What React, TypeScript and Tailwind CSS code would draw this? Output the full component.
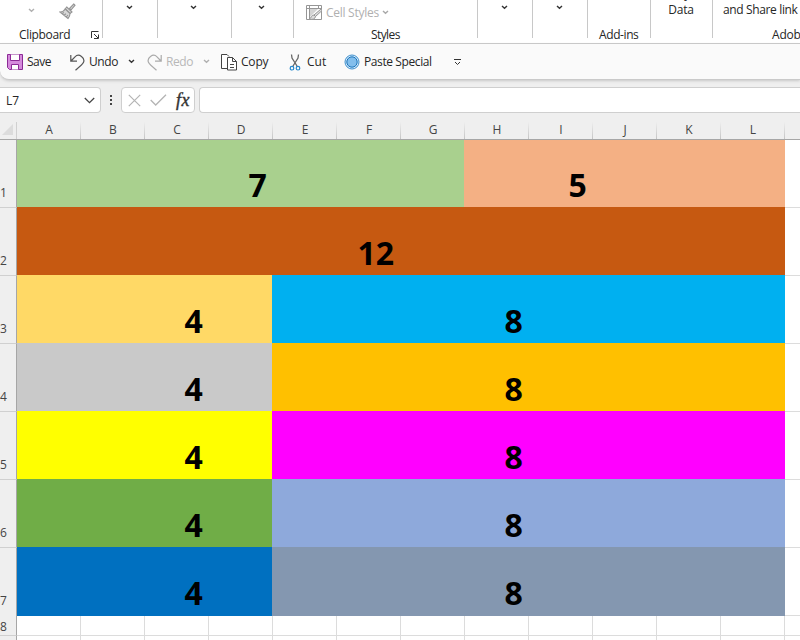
import React from "react";

function Chevron({ color = "#333", className = "" }: { color?: string; className?: string }) {
  return (
    <svg width="7" height="5" viewBox="0 0 7 5" className={"block shrink-0 " + className} fill="none" stroke={color} strokeWidth="1.4">
      <path d="M1 1 L3.5 3.3 L6 1" />
    </svg>
  );
}

function Group({ className, label, labelClass, children }: { className: string; label?: string; labelClass?: string; children?: React.ReactNode }) {
  return (
    <div className={"flex h-[43px] shrink-0 flex-col overflow-hidden " + className}>
      <div className="flex h-[26px] w-full">{children}</div>
      {label && <div className={"h-4 whitespace-nowrap leading-4 " + labelClass}>{label}</div>}
    </div>
  );
}

function Divider() {
  return <div className="h-[38px] w-px shrink-0 bg-[#c8c8c8]" />;
}

function Ribbon() {
  return (
    <div className="flex h-11 overflow-hidden border-b border-[#c8c8c8] bg-white">
      <Group className="w-[102px]">
        <div className="flex w-full flex-col">
          <div className="flex h-[26px] shrink-0">
            <Chevron color="#b0b0b0" className="ml-[28px] mt-[8px]" />
            <svg className="ml-[24px] mt-[3px]" width="18" height="17" viewBox="0 0 18 17" fill="#d8d8d8" stroke="#969696" strokeWidth="1.1">
              <path d="M14.7 1 L16 2.2 L12 7 L10.4 5.5 Z" />
              <path d="M7.7 4 L13 9 L11 10.5 L6.2 6 Z" />
              <path d="M6.2 6 L11 10.5 C11 13 10.5 14 9 15.5 L1 9 C3.5 9 5 8 6.2 6 Z M3 10.5 L5 9.5 M5 12.3 L7 10.8 M7.3 14 L9 12" />
            </svg>
          </div>
          <div className="flex h-4 shrink-0">
            <span className="ml-[19px] w-[71px] pt-px leading-4 tracking-[-0.35px]">Clipboard</span>
            <svg className="mt-[4px]" width="10" height="10" viewBox="0 0 10 10" fill="none" stroke="#333">
              <path d="M1.5 8 V1.5 H8.5 M4 4 L8 8 M8.5 4.5 V8.5 H4" />
            </svg>
          </div>
        </div>
      </Group>
      <Divider />
      <Group className="w-[54px]"><Chevron className="ml-[23px] mt-[5px]" /></Group>
      <Divider />
      <Group className="w-[73px]"><Chevron className="ml-[32px] mt-[5px]" /></Group>
      <Divider />
      <Group className="w-[61px]"><Chevron className="ml-[26px] mt-[5px]" /></Group>
      <Divider />
      <Group className="w-[183px]" label="Styles" labelClass="pl-[77px] pt-px tracking-[-0.6px]">
        <svg className="ml-[12px] mt-[5px]" width="17" height="16" viewBox="0 0 17 16" fill="none" stroke="#969696">
          <path d="M.5 .5 H15.5 V14.5 H.5 Z M.5 3.5 H15.5 M3.5 .5 V14.5 M12.5 .5 V4" />
          <path d="M4 4 H12 L4 12 Z" fill="#d4d4d4" stroke="none" />
          <path d="M15 4 L8 10 L9.5 11.5 L15.5 6 M8 10 C5 10 6 13 3 14 C7 15 9 14 9.5 11.5" fill="#ddd" />
        </svg>
        <span className="ml-[3px] mt-[5px] w-[56px] whitespace-nowrap leading-4 tracking-[-0.27px] text-[#b0b0b0]">Cell Styles</span>
        <Chevron color="#a8a8a8" className="mt-[10px]" />
      </Group>
      <Divider />
      <Group className="w-[54px]"><Chevron className="ml-[23px] mt-[5px]" /></Group>
      <Divider />
      <Group className="w-[54px]"><Chevron className="ml-[23px] mt-[5px]" /></Group>
      <Divider />
      <Group className="w-[62px]" label="Add-ins" labelClass="pl-[11px] pt-px tracking-[-0.4px]" />
      <Divider />
      <Group className="w-[61px]">
        <div className="-mt-[14px] flex w-full flex-col items-center pr-px">
          <span className="h-4 leading-4">Analyze</span>
          <span className="leading-4 tracking-[-0.2px]">Data</span>
        </div>
      </Group>
      <Divider />
      <Group className="w-[87px]" label="Adobe Acrobat" labelClass="pl-[59px] pt-px tracking-[-0.2px]">
        <span className="ml-[10px] mt-[2px] whitespace-nowrap leading-4 tracking-[-0.36px]">and Share link</span>
      </Group>
    </div>
  );
}

function QuickAccess() {
  return (
    <div className="flex h-9 items-center rounded-bl-[9px] border-b border-[#cacaca] bg-[#fafafa] shadow-[0_1px_3px_#c8c8c8]">
      <svg className="ml-[7px] mt-px" width="16" height="16" viewBox="0 0 16 16" fill="#d58bdc" stroke="#8c2b96">
        <path d="M.5 .5 H15.5 V15.5 H2.5 L.5 13.5 Z" />
        <path d="M3.5 .5 V6.5 H12.5 V.5 M4.5 15.5 V10.5 H11.5 V15.5" fill="#fff" />
      </svg>
      <span className="ml-[4px] w-[43px] pt-px tracking-[-0.5px]">Save</span>
      <svg className="mt-px" width="15" height="17" viewBox="0 0 15 17" fill="none" stroke="#555" strokeWidth="1.2">
        <path d="M.8 1 V7.2 H7 M1 7 L5 2.8 C9-1.2 15.5 4 13.4 8.5 C12.8 10 11 11.5 5.5 16.2" />
      </svg>
      <span className="ml-[4px] w-[39px] pt-px tracking-[-0.4px]">Undo</span>
      <Chevron />
      <svg className="ml-[12px] mt-px" width="15" height="17" viewBox="0 0 15 17" fill="none" stroke="#aaa" strokeWidth="1.2">
        <path d="M14.2 1 V7.2 H8 M14 7 L10 2.8 C6-1.2-.5 4 1.6 8.5 C2.2 10 4 11.5 9.5 16.2" />
      </svg>
      <span className="ml-[4px] w-[37px] pt-px tracking-[-0.45px] text-[#b8b8b8]">Redo</span>
      <Chevron color="#b0b0b0" />
      <svg className="ml-[11px] mt-px" width="16" height="17" viewBox="0 0 16 17" fill="#fff" stroke="#444">
        <path d="M6 14.5 H.5 V.5 H6 L8 2.5" />
        <path d="M6.5 3.5 H11.5 L15.5 7.5 V16 H6.5 Z M11.5 3.5 V7.5 H15.5 M9 10.5 H13 M9 13.5 H13" />
      </svg>
      <span className="ml-[4px] w-[48px] pt-px tracking-[-0.2px]">Copy</span>
      <svg className="mt-[2px]" width="12" height="17" viewBox="0 0 12 17" fill="none" stroke="#666">
        <path d="M2.5 .5 L3 4 L8.3 12.5 M9.5 .5 L9 4 L3.7 12.5" strokeWidth="1.3" />
        <circle cx="3" cy="14.2" r="1.8" stroke="#2587cc" strokeWidth="1.2" />
        <circle cx="9" cy="14.2" r="1.8" stroke="#2587cc" strokeWidth="1.2" />
      </svg>
      <span className="ml-[6px] w-[37px] pt-px">Cut</span>
      <svg className="mt-px" width="16" height="16" viewBox="0 0 16 16">
        <circle cx="8" cy="8" r="7" fill="#d7eafa" stroke="#3c8fce" />
        <circle cx="8" cy="8" r="5.2" fill="#83beec" stroke="#1673ba" />
      </svg>
      <span className="ml-[4px] w-[90px] whitespace-nowrap pt-px tracking-[-0.4px]">Paste Special</span>
      <svg className="mt-px" width="7" height="7" viewBox="0 0 7 7" fill="none" stroke="#333"><path d="M0 .5 H7 M1 3 L3.5 5.5 L6 3" /></svg>
    </div>
  );
}

function FormulaBar() {
  return (
    <div className="flex h-[42px] pt-[7px]">
      <div className="flex h-[26px] w-[101px] items-center justify-between rounded-r-[4px] border border-l-0 border-[#cfcfcf] bg-white pl-[6px] pr-[5px]">
        <span className="pt-px tracking-[-0.1px]">L7</span>
        <svg className="mt-px" width="11" height="7" viewBox="0 0 11 7" fill="none" stroke="#444" strokeWidth="1.3"><path d="M.8 1 L5.5 5.6 L10.2 1" /></svg>
      </div>
      <div className="ml-[9px] flex w-[2px] flex-col gap-[2px] pt-[8px]">
        <i className="h-[2px] bg-[#444]" /><i className="h-[2px] bg-[#444]" /><i className="h-[2px] bg-[#444]" />
      </div>
      <div className="ml-[9px] flex h-[26px] w-[74px] items-center rounded-[4px] border border-[#cfcfcf] bg-white pl-[6px]">
        <svg width="13" height="13" viewBox="0 0 13 13" stroke="#b4b4b4" strokeWidth="1.2"><path d="M.8 .8 L12.2 12.2 M12.2 .8 L.8 12.2" /></svg>
        <svg className="ml-[9px]" width="17" height="12" viewBox="0 0 17 12" fill="none" stroke="#b4b4b4" strokeWidth="1.3"><path d="M.7 6 L5.7 11 L16 .8" /></svg>
        <span className="ml-[9px] font-['Liberation_Serif',serif] text-[18px] italic leading-5 tracking-[0.5px] text-[#333] [-webkit-text-stroke:0.4px_#333]">fx</span>
      </div>
      <div className="ml-[4px] h-[26px] grow rounded-l-[4px] border border-r-0 border-[#cfcfcf] bg-white" />
    </div>
  );
}

const columns = ["A", "B", "C", "D", "E", "F", "G", "H", "I", "J", "K", "L"];

function ColumnHeaders() {
  return (
    <div className="flex h-[18px] border-b border-[#a6a6a6] text-[#444]">
      <div className="flex w-[17px] border-r border-[#d0d0d0] pl-[2px]">
        <svg width="12" height="14" viewBox="0 0 12 14"><path d="M11 2 V13 H0 Z" fill="#dcdcdc" /></svg>
      </div>
      {columns.map((c) => (
        <div key={c} className="flex w-16 shrink-0 justify-center">
          <span className="grow pl-px text-center leading-[15px]">{c}</span>
          <i className="h-full w-px bg-gradient-to-b from-[#efefef] to-[#c4c4c4]" />
        </div>
      ))}
    </div>
  );
}

type Cell = [string, string];
const rows: Cell[][] = [
  [["7", "w-[447px] bg-[#a9d08e] pl-[231.5px]"], ["5", "w-[321px] bg-[#f4b084] pl-[104.5px]"]],
  [["12", "w-[768px] bg-[#c65911] pl-[340.5px]"]],
  [["4", "w-[255px] bg-[#ffd966] pl-[167.5px]"], ["8", "w-[513px] bg-[#00b0f0] pl-[232.5px]"]],
  [["4", "w-[255px] bg-[#c9c9c9] pl-[167.5px]"], ["8", "w-[513px] bg-[#ffc000] pl-[232.5px]"]],
  [["4", "w-[255px] bg-[#ffff00] pl-[167.5px]"], ["8", "w-[513px] bg-[#ff00ff] pl-[232.5px]"]],
  [["4", "w-[255px] bg-[#70ad47] pl-[167.5px]"], ["8", "w-[513px] bg-[#8ea9db] pl-[232.5px]"]],
  [["4", "w-[255px] bg-[#0070c0] pl-[167.5px]"], ["8", "w-[513px] bg-[#8497b0] pl-[232.5px]"]],
];

function Sheet() {
  return (
    <div className="flex flex-col bg-white">
      {rows.map((cells, i) => (
        <div key={i} className={"flex shrink-0 " + (i === 0 ? "h-[67px]" : i === 6 ? "h-[69px]" : "h-[68px]")}>
          <div className={"flex w-[17px] flex-col border-r border-[#a6a6a6] bg-[#efefef] text-[#444] " + (i > 0 ? "border-t border-t-[#d0d0d0]" : "")}>
            <span className="mt-[45px] leading-4">{i + 1}</span>
          </div>
          {cells.map(([n, cls]) => (
            <div key={n} className={"shrink-0 font-['Noto_Sans',sans-serif] text-[32px] font-bold leading-[40px] text-black " + cls + (i === 0 ? " pt-[25px]" : " pt-[26px]")}>{n}</div>
          ))}
          <div className={"grow " + (i > 0 ? "border-t border-[#dcdcdc] " : "") + (i === 6 ? "border-b border-b-[#dcdcdc]" : "")} />
        </div>
      ))}
      <div className="flex h-[20px] shrink-0">
        <div className="w-[17px] border-b border-r border-b-[#d0d0d0] border-r-[#a6a6a6] bg-[#efefef] text-[#444]"><span className="block pt-[3px] leading-4">8</span></div>
        {columns.map((c) => <div key={c} className="w-16 shrink-0 border-b border-r border-[#dcdcdc]" />)}
        <div className="grow border-b border-[#dcdcdc]" />
      </div>
      <div className="flex h-[4px] shrink-0">
        <div className="w-[17px] border-r border-[#a6a6a6] bg-[#efefef]" />
        {columns.map((c) => <div key={c} className="w-16 shrink-0 border-r border-[#dcdcdc]" />)}
      </div>
    </div>
  );
}

export default function App() {
  return (
    <div className="h-[640px] w-[800px] overflow-hidden bg-[#efefef] font-['Open_Sans','Noto_Sans',sans-serif] text-[12px] text-[#262626]">
      <Ribbon />
      <QuickAccess />
      <FormulaBar />
      <ColumnHeaders />
      <Sheet />
    </div>
  );
}
